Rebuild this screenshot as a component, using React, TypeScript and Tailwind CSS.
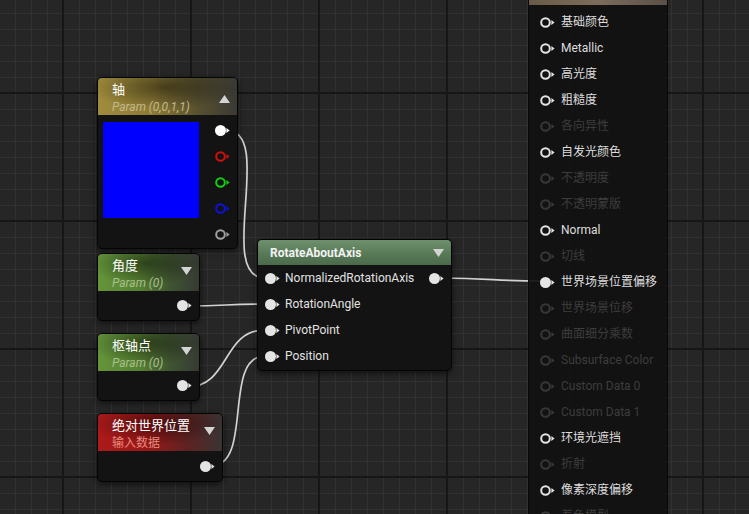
import React from "react";

type PinProps = { color?: string; filled?: boolean };

// material graph pin: ring (or filled dot) with a small arrow on the right
const Pin = ({ color = "#e4e4e4", filled = false }: PinProps) => (
  <svg width="15" height="11" viewBox="0 0 15 11" className="shrink-0">
    {filled ? (
      <circle cx="5.5" cy="5.5" r="5.5" fill={color} />
    ) : (
      <circle cx="5.5" cy="5.5" r="4.3" fill="none" stroke={color} strokeWidth="2" />
    )}
    <polygon points="11.4,3 14.6,5.5 11.4,8" fill={color} />
  </svg>
);

const Arrow = ({ up = false }: { up?: boolean }) => (
  <svg width="11" height="8" viewBox="0 0 11 8">
    <polygon points={up ? "0,8 5.5,0 11,8" : "0,0 11,0 5.5,8"} fill="#d4d4d4" />
  </svg>
);

type ParamNodeProps = {
  className: string;
  header: string;
  title: string;
  sub: string;
  subClass: string;
  arrowClass: string;
  up?: boolean;
  children: React.ReactNode;
};

const ParamNode = ({ className, header, title, sub, subClass, arrowClass, up, children }: ParamNodeProps) => (
  <div
    className={`absolute flex flex-col overflow-hidden rounded-[5px] border border-[#050505] bg-[#131313] shadow-[0_2px_6px_rgba(0,0,0,0.6)] ${className}`}
  >
    <div className={`relative flex h-[37px] shrink-0 items-start pl-[14px] pr-[7px] pt-[3px] ${header}`}>
      <div className="absolute inset-0 bg-[radial-gradient(ellipse_55%_60%_at_48%_25%,rgba(0,0,0,0.45),transparent)]" />
      <div className="relative flex flex-col">
        <span className="text-[13px] leading-[18px] text-white">{title}</span>
        <span className={`text-[12px] leading-[16px] ${subClass}`}>{sub}</span>
      </div>
      <div className={`relative ml-auto ${arrowClass}`}>
        <Arrow up={up} />
      </div>
    </div>
    {children}
  </div>
);

const axisPins = ["#ffffff", "#d01010", "#10d010", "#1010e0", "#a0a0a0"];

const rotateInputs = ["NormalizedRotationAxis", "RotationAngle", "PivotPoint", "Position"];

const materialInputs: { label: string; on: boolean; linked?: boolean }[] = [
  { label: "基础颜色", on: true },
  { label: "Metallic", on: true },
  { label: "高光度", on: true },
  { label: "粗糙度", on: true },
  { label: "各向异性", on: false },
  { label: "自发光颜色", on: true },
  { label: "不透明度", on: false },
  { label: "不透明蒙版", on: false },
  { label: "Normal", on: true },
  { label: "切线", on: false },
  { label: "世界场景位置偏移", on: true, linked: true },
  { label: "世界场景位移", on: false },
  { label: "曲面细分乘数", on: false },
  { label: "Subsurface Color", on: false },
  { label: "Custom Data 0", on: false },
  { label: "Custom Data 1", on: false },
  { label: "环境光遮挡", on: true },
  { label: "折射", on: false },
  { label: "像素深度偏移", on: true },
  { label: "着色模型", on: false },
];

export default function App() {
  return (
    <div className="relative h-[514px] w-[749px] overflow-hidden bg-[#262626] font-['Roboto','Noto_Sans_CJK_SC',sans-serif] [background-image:linear-gradient(to_right,#161616_2px,transparent_2px),linear-gradient(to_bottom,#161616_2px,transparent_2px),linear-gradient(to_right,#313131_1px,transparent_1px),linear-gradient(to_bottom,#313131_1px,transparent_1px)] [background-position:62px_92px,62px_92px,15px_13px,15px_13px] [background-size:128px_128px,128px_128px,16px_16px,16px_16px]">
      {/* wires */}
      <svg className="absolute inset-0" width="749" height="514" fill="none" stroke="#d2d2d2" strokeWidth="1.7">
        <path d="M226,130 C276,130 215,278 265,278" />
        <path d="M187,306 C227,306 225,304 265,304" />
        <path d="M187,387 C230,387 222,330 265,330" />
        <path d="M211,466 C254,466 222,356 265,356" />
        <path d="M440,278 C490,278 495,281 541,281" />
      </svg>

      <ParamNode
        className="left-[97px] top-[77px] h-[172px] w-[141px]"
        header="bg-[linear-gradient(to_right,#a08c3d_0%,#8c7a34_40%,#57502f_72%,#3a3934_100%)]"
        title="轴"
        sub="Param (0,0,1,1)"
        subClass="italic text-[#c2b88e]"
        arrowClass="mt-[14px]"
        up
      >
        <div className="flex flex-1">
          <div className="ml-[5px] mt-[7px] h-[96px] w-[96px] bg-[#0000ff]" />
          <div className="ml-auto flex flex-col pr-[7px] pt-[2px]">
            {axisPins.map((c, i) => (
              <div key={c} className="flex h-[26px] items-center">
                <Pin color={c} filled={i === 0} />
              </div>
            ))}
          </div>
        </div>
      </ParamNode>

      <ParamNode
        className="left-[97px] top-[253px] h-[68px] w-[103px]"
        header="bg-[linear-gradient(to_right,#64943a_0%,#578232_40%,#3f5431_72%,#363a34_100%)]"
        title="角度"
        sub="Param (0)"
        subClass="italic text-[#a9bf8c]"
        arrowClass="mt-[10px]"
      >
        <div className="flex flex-1 items-center justify-end pr-[7px]">
          <Pin filled />
        </div>
      </ParamNode>

      <ParamNode
        className="left-[97px] top-[333px] h-[68px] w-[103px]"
        header="bg-[linear-gradient(to_right,#64943a_0%,#578232_40%,#3f5431_72%,#363a34_100%)]"
        title="枢轴点"
        sub="Param (0)"
        subClass="italic text-[#a9bf8c]"
        arrowClass="mt-[10px]"
      >
        <div className="flex flex-1 items-center justify-end pr-[7px]">
          <Pin filled />
        </div>
      </ParamNode>

      <ParamNode
        className="left-[97px] top-[413px] h-[69px] w-[126px]"
        header="bg-[linear-gradient(to_right,#ad1a1a_0%,#9a1818_40%,#5e2222_72%,#3a3434_100%)]"
        title="绝对世界位置"
        sub="输入数据"
        subClass="text-[#e58a7e]"
        arrowClass="mt-[10px]"
      >
        <div className="flex flex-1 items-center justify-end pr-[7px]">
          <Pin filled />
        </div>
      </ParamNode>

      {/* RotateAboutAxis */}
      <div className="absolute left-[257px] top-[239px] flex h-[132px] w-[195px] flex-col overflow-hidden rounded-[5px] border border-[#050505] bg-[#131313] shadow-[0_2px_6px_rgba(0,0,0,0.6)]">
        <div className="flex h-[25px] shrink-0 items-center bg-[linear-gradient(to_bottom,#6e906c_0%,#587a57_55%,#4b6a4a_100%)] pl-[12px] pr-[7px]">
          <span className="text-[12px] font-bold text-[#f2f2f2]">RotateAboutAxis</span>
          <div className="ml-auto">
            <Arrow />
          </div>
        </div>
        <div className="flex flex-col">
          {rotateInputs.map((label, i) => (
            <div key={label} className="flex h-[26px] items-center pl-[7px] pr-[7px]">
              <Pin filled />
              <span className="ml-[5px] text-[12px] text-[#e2e2e2]">{label}</span>
              {i === 0 && (
                <div className="ml-auto">
                  <Pin filled />
                </div>
              )}
            </div>
          ))}
        </div>
      </div>

      {/* material result node */}
      <div className="absolute left-[528px] top-0 flex h-[514px] w-[140px] flex-col border-x border-[#080808] bg-[rgba(17,17,17,0.93)]">
        <div className="h-[5px] shrink-0 bg-[linear-gradient(to_right,#6a5a48,#7c6c5a_50%,#5a5048)]" />
        <div className="flex flex-col pt-[4px]">
          {materialInputs.map((m) => (
            <div key={m.label} className="flex h-[26px] shrink-0 items-center pl-[11px]">
              <Pin color={m.on ? "#e4e4e4" : "#383838"} filled={m.linked} />
              <span className={`ml-[6px] whitespace-nowrap text-[12px] ${m.on ? "text-[#dedede]" : "text-[#3d3d3d]"}`}>
                {m.label}
              </span>
            </div>
          ))}
        </div>
      </div>
    </div>
  );
}
